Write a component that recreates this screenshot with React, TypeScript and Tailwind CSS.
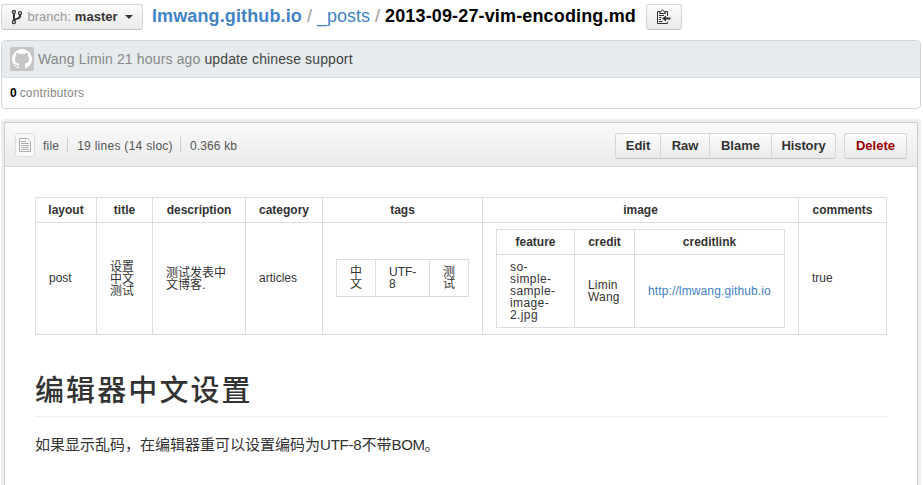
import React from "react";

const font = "font-['Liberation_Sans','Noto_Sans_CJK_SC',sans-serif]";
const btn =
  "border border-[#d5d5d5] border-b-[#c3c3c3] bg-linear-to-b from-[#fcfcfc] to-[#eaeaea] h-[26px] flex items-center justify-center";

function BranchIcon() {
  return (
    <svg width="12" height="16" viewBox="0 0 12 16" fill="none" stroke="#333" strokeWidth="1.3">
      <circle cx="2.9" cy="3" r="1.500" />
      <circle cx="2.9" cy="13.200" r="1.500" />
      <circle cx="9" cy="4.200" r="1.500" />
      <path d="M2.9 4.600v7" strokeWidth="2" />
      <path d="M9 5.800v1.400c0 1.600-1.200 2-2.600 2.400C4.800 10 3.600 10.400 3.200 11.600" strokeWidth="2" />
    </svg>
  );
}

function ClipboardIcon() {
  return (
    <svg width="16" height="16" viewBox="0 0 16 16" fill="none" stroke="#333">
      <path d="M4 2.500H1.500v12h10V13M11.500 7V2.500H9" />
      <path d="M3.500 4.500h6v-1L8 2.800C8 1.600 7.500 1 6.500 1S5 1.600 5 2.800l-1.500.7z" />
      <path d="M3 6.500h5M3 8.500h2.500M3 10.500h2M3 12.500h3.500" />
      <path d="M10 6.500v2h4.500v2H10v2L6 9.500z" fill="#333" stroke="none" />
    </svg>
  );
}

function Avatar() {
  return (
    <svg width="24" height="24" viewBox="0 0 24 24">
      <rect width="24" height="24" rx="2" fill="#c6c6c6" />
      <circle cx="12" cy="12" r="10" fill="#fff" />
      <path
        fill="#c6c6c6"
        d="M6.300 6c1.200-.1 2.300.5 3 1.100a12 12 0 0 1 5.400 0c.7-.6 1.800-1.200 3-1.100.5 1.200.3 2.200.1 2.700 1 1 1.400 2.200 1.300 3.800-.2 3-2.200 4-4.700 4.300.5.500.7 1.200.7 2v2.700a10 10 0 0 1-6.200 0v-1.800c-2 .4-2.800-.5-3.300-1.600-.3-.6-.7-.9-1.200-1.200 1.500-.4 2 .8 2.600 1.400.6.600 1.300.5 2 .3 0-.7.300-1.300.7-1.800-2.500-.3-4.600-1.300-4.700-4.300 0-1.600.4-2.800 1.300-3.800-.3-.7-.4-1.600 0-2.700z"
      />
    </svg>
  );
}

function FileIcon() {
  return (
    <svg width="12" height="14" viewBox="0 0 12 14" fill="#fff" stroke="#aaa">
      <path d="M.5.500h8l3 3v10H.5z" />
      <path d="M2 3.500h5M2 5.500h8M2 7.500h8M2 9.500h8M2 11.500h8" />
    </svg>
  );
}

function Th({ children }: { children: React.ReactNode }) {
  return <th className="border border-[#ddd] px-0 py-1.5 text-center font-bold">{children}</th>;
}

function Td({ children, raised = false }: { children: React.ReactNode; raised?: boolean }) {
  return (
    <td
      className={`border border-[#ddd] pr-0 pl-[13px] text-left align-middle ${raised ? "pt-1.5 pb-2" : "py-1.5"}`}
    >
      {children}
    </td>
  );
}

function Cols({ widths }: { widths: number[] }) {
  return (
    <colgroup>
      {widths.map((w, i) => (
        <col key={i} style={{ width: w }} />
      ))}
    </colgroup>
  );
}

const table = "table-fixed border-collapse text-[12px] leading-[12px] text-[#333]";

function MetaTable() {
  return (
    <table className={`${table} w-[852px]`}>
      <Cols widths={[61, 56, 93, 77, 160, 316, 88]} />
      <thead>
        <tr>
          <Th>layout</Th>
          <Th>title</Th>
          <Th>description</Th>
          <Th>category</Th>
          <Th>tags</Th>
          <Th>image</Th>
          <Th>comments</Th>
        </tr>
      </thead>
      <tbody>
        <tr>
          <Td raised>post</Td>
          <Td>设置<br />中文<br />测试</Td>
          <Td>测试发表中<br />文博客.</Td>
          <Td raised>articles</Td>
          <Td raised>
            <table className={`${table} w-[133px]`}>
              <Cols widths={[39, 54, 39]} />
              <tbody>
                <tr>
                  <Td>中<br />文</Td>
                  <Td>UTF-<br />8</Td>
                  <Td>测<br />试</Td>
                </tr>
              </tbody>
            </table>
          </Td>
          <Td>
            <table className={`${table} w-[289px]`}>
              <Cols widths={[78, 60, 150]} />
              <thead>
                <tr>
                  <Th>feature</Th>
                  <Th>credit</Th>
                  <Th>creditlink</Th>
                </tr>
              </thead>
              <tbody>
                <tr>
                  <Td>
                    <span className="tracking-[0.4px]">so-<br />simple-<br />sample-<br />image-<br />2.jpg</span>
                  </Td>
                  <Td><span className="tracking-[0.2px]">Limin<br />Wang</span></Td>
                  <Td><a className="tracking-[0.12px] text-[#4183c4]">http://lmwang.github.io</a></Td>
                </tr>
              </tbody>
            </table>
          </Td>
          <Td raised>true</Td>
        </tr>
      </tbody>
    </table>
  );
}

export default function App() {
  return (
    <div className={`${font} h-[485px] w-[923px] overflow-hidden bg-white pl-px text-[#333]`}>
      <header className="flex h-10 items-start pt-1">
        <button className={`${btn} w-[142px] rounded-[3px] text-[13px]`}>
          <BranchIcon />
          <span className="ml-1 text-[#999]">branch:</span>
          <b className="ml-1">master</b>
          <span className="ml-[7px] h-0 w-0 border-x-4 border-t-4 border-x-transparent border-t-[#333]" />
        </button>
        <div className="ml-[9px] flex h-6 items-center text-[18px] whitespace-pre">
          <b className="tracking-[0.12px] text-[#4183c4]">lmwang.github.io</b>
          <span className="text-[#999]"> / </span>
          <span className="text-[#4183c4]">_posts</span>
          <span className="text-[#999]"> / </span>
          <b className="tracking-[0.15px] text-black">2013-09-27-vim-encoding.md</b>
        </div>
        <button className={`${btn} ml-[10.5px] w-9 rounded-[3px]`}>
          <ClipboardIcon />
        </button>
      </header>

      <section className="h-[69px] w-[920px] overflow-hidden rounded-[4px] border border-[#cfd9db]">
        <div className="flex h-[37px] items-center border-b border-[#d8e1e4] bg-[#e6ebed] pl-2 text-[14px] text-[#888]">
          <Avatar />
          <span className="ml-1 tracking-[0.15px]">Wang Limin 21 hours ago</span>
          <span className="ml-1 tracking-[0.12px] text-[#444]">update chinese support</span>
        </div>
        <div className="flex h-[30px] items-center pl-2 text-[12px] text-[#888]">
          <b className="mr-[3px] text-black">0</b>
          <span className="tracking-[0.15px]">contributors</span>
        </div>
      </section>

      <main className="mt-[10px] h-[380px] w-[920px] rounded-t-[3px] bg-[#eee] px-[3px] pt-[3px]">
        <div className="h-full border border-[#ccc] bg-white">
          <div className="flex h-11 items-center border-b border-[#d8d8d8] bg-linear-to-b from-[#fafafa] to-[#eaeaea] pl-[10px] text-[12px] text-[#555]">
            <span className="mt-px flex h-6 w-5 items-center justify-center rounded-[3px] border border-[#ddd] bg-[#f8f8f8]">
              <FileIcon />
            </span>
            <span className="ml-2 pt-0.5 tracking-[0.2px]">file</span>
            <span className="ml-2 h-[15px] w-px bg-[#ccc]" />
            <span className="ml-[9px] pt-0.5 tracking-[0.28px]">19 lines (14 sloc)</span>
            <span className="ml-[7px] h-[15px] w-px bg-[#ccc]" />
            <span className="ml-[9px] pt-0.5 tracking-[0.15px]">0.366 kb</span>
            <div className="mt-[3px] mr-[10px] ml-auto flex text-[13px] font-bold text-[#333]">
              <button className={`${btn} w-[46px] rounded-l-[3px]`}>Edit</button>
              <button className={`${btn} -ml-px w-[50px]`}>Raw</button>
              <button className={`${btn} -ml-px w-[63px]`}>Blame</button>
              <button className={`${btn} -ml-px w-[65px] rounded-r-[3px] tracking-[-0.1px]`}>History</button>
              <button className={`${btn} ml-2 w-[63px] rounded-[3px] text-[#900]`}>Delete</button>
            </div>
          </div>
          <article className="pt-[30px] pr-[30px] pl-[30px]">
            <MetaTable />
            <h1 className="mt-[35px] flex h-[47px] w-[852px] items-center border-b border-[#eee] pb-0.5 text-[29px] font-medium tracking-[2.1px]">
              编辑器中文设置
            </h1>
            <p className="mt-4 text-[15px] leading-6">
              如果显示乱码，在编辑器重可以设置编码为<span className="tracking-[-0.2px]">UTF-8</span>不带
              <span className="tracking-[-0.4px]">BOM</span>。
            </p>
          </article>
        </div>
      </main>
    </div>
  );
}
